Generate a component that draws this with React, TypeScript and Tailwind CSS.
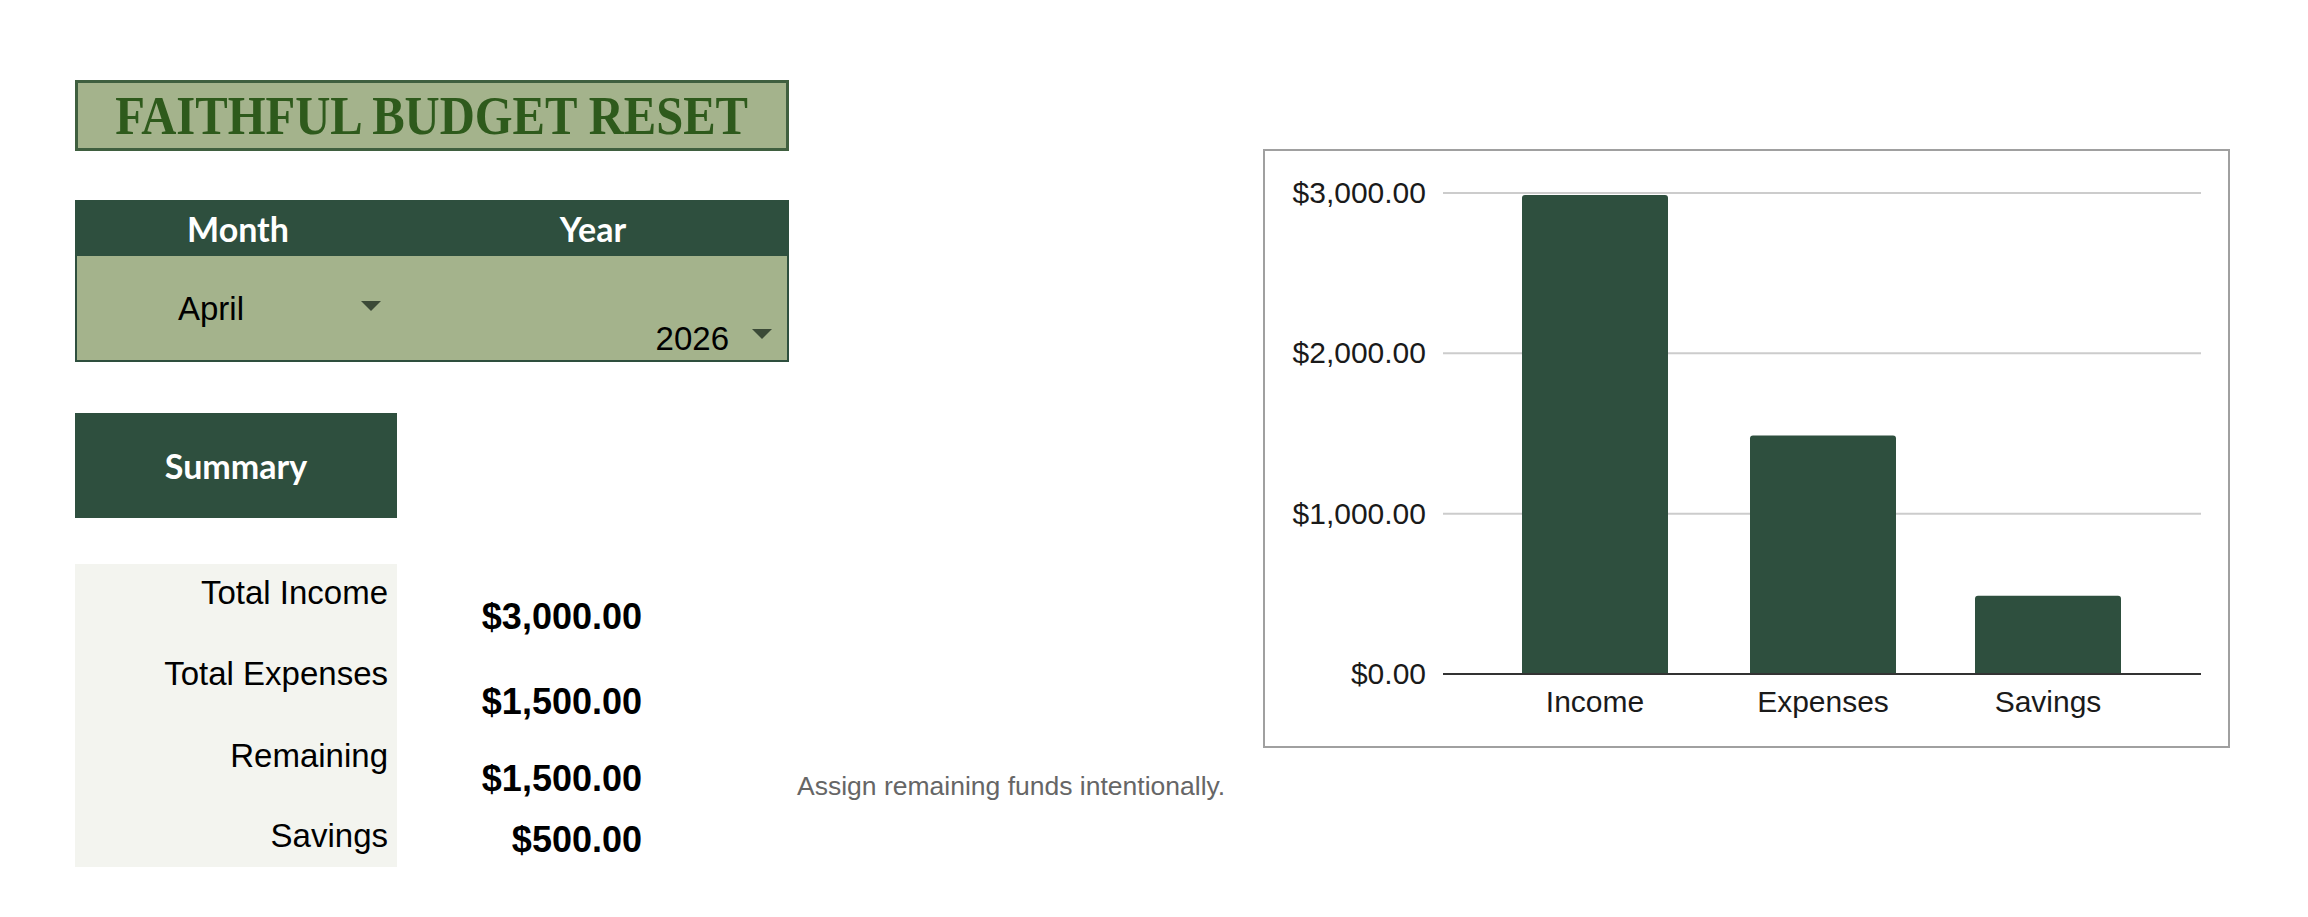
import React from 'react';

const GREEN = '#2e4f3e';

const rows = [
  { label: 'Total Income', value: '$3,000.00', h: 'h-[80px]', lp: 'pt-[12px]', vp: 'pt-[35px]' },
  { label: 'Total Expenses', value: '$1,500.00', h: 'h-[81px]', lp: 'pt-[13px]', vp: 'pt-[40px]' },
  { label: 'Remaining', value: '$1,500.00', h: 'h-[81px]', lp: 'pt-[14px]', vp: 'pt-[36px]', note: true },
  { label: 'Savings', value: '$500.00', h: 'h-[61px]', lp: 'pt-[13px]', vp: 'pt-[16px]' },
];

const chartData = [
  { name: 'Income', value: 3000, x: 257 },
  { name: 'Expenses', value: 1500, x: 485 },
  { name: 'Savings', value: 500, x: 710 },
];

const Caret = ({ className }: { className?: string }) => (
  <svg width="20" height="10" viewBox="0 0 20 10" className={className}>
    <path d="M0 0 L20 0 L10 10 Z" fill="#3b4a37" />
  </svg>
);

const BarChart: React.FC = () => {
  const base = 523;
  const top = 42;
  const span = base - top;
  const grid = [3000, 2000, 1000];
  const fmt = (v: number) => '$' + v.toLocaleString('en-US') + '.00';

  return (
    <svg viewBox="0 0 963 595" className="block w-full h-full font-['Liberation_Sans',Arial,sans-serif]">
      {grid.map((g) => {
        const y = base - (g / 3000) * span;
        return (
          <g key={g}>
            <line x1="178" x2="936" y1={y} y2={y} stroke="#cccccc" strokeWidth="2" />
            <text x="161" y={y + 10} textAnchor="end" fontSize="30" fill="#1a1a1a">{fmt(g)}</text>
          </g>
        );
      })}
      {chartData.map((d) => {
        const y = base - (d.value / 3000) * span + 2;
        const w = 146;
        const r = 3;
        return (
          <path
            key={d.name}
            d={`M${d.x} ${base} L${d.x} ${y + r} Q${d.x} ${y} ${d.x + r} ${y} L${d.x + w - r} ${y} Q${d.x + w} ${y} ${d.x + w} ${y + r} L${d.x + w} ${base} Z`}
            fill={GREEN}
          />
        );
      })}
      <line x1="178" x2="936" y1={base} y2={base} stroke="#333333" strokeWidth="2" />
      <text x="161" y={base + 10} textAnchor="end" fontSize="30" fill="#1a1a1a">$0.00</text>
      {chartData.map((d) => (
        <text key={d.name} x={d.x + 73} y="561" textAnchor="middle" fontSize="30" fill="#1a1a1a">{d.name}</text>
      ))}
    </svg>
  );
};

const App: React.FC = () => {
  return (
    <div className="min-h-screen w-full bg-white flex items-start font-['Liberation_Sans',Arial,sans-serif] text-black">
      <div className="w-[1263px] pl-[75px] pt-[80px] flex flex-col shrink-0">
        {/* Title */}
        <div className="w-[714px] h-[71px] border-[3px] border-[#3f5f3f] bg-[#a4b38c] flex items-center justify-center">
          <span className="inline-block scale-x-90 font-['Liberation_Serif',serif] font-bold text-[54px] leading-none text-[#2e5a1c] whitespace-nowrap">
            FAITHFUL BUDGET RESET
          </span>
        </div>

        {/* Month / Year */}
        <div className="mt-[49px] w-[714px] border-2 border-[#2e4f3e]">
          <div className="h-[54px] bg-[#2e4f3e] flex items-center font-['Lato',sans-serif] font-bold text-[34px] leading-none text-white">
            <div className="w-[322px] text-center">Month</div>
            <div className="flex-1 text-center">Year</div>
          </div>
          <div className="h-[104px] bg-[#a4b38c] flex">
            <div className="w-[322px] flex items-center pl-[101px] pr-[18px]">
              <span className="text-[33px] leading-none">April</span>
              <Caret className="ml-auto -mt-[4px]" />
            </div>
            <div className="flex-1 flex items-end justify-end pr-[15px] pb-[5px]">
              <span className="text-[33px] leading-none">2026</span>
              <Caret className="ml-[23px] mb-[16px]" />
            </div>
          </div>
        </div>

        {/* Summary header */}
        <div className="mt-[51px] w-[322px] h-[105px] bg-[#2e4f3e] flex items-center justify-center font-['Lato',sans-serif] font-bold text-[34px] text-white">
          Summary
        </div>

        {/* Summary rows */}
        <div className="mt-[46px] flex flex-col">
          {rows.map((r) => (
            <div key={r.label} className={`flex ${r.h}`}>
              <div className={`w-[322px] shrink-0 bg-[#f3f4ef] text-right pr-[9px] ${r.lp}`}>
                <span className="text-[33px] leading-none block">{r.label}</span>
              </div>
              <div className={`w-[245px] shrink-0 text-right ${r.vp}`}>
                <span className="text-[36px] leading-none font-bold block">{r.value}</span>
              </div>
              {r.note && (
                <div className="ml-[155px] shrink-0 pt-[48px]">
                  <span className="text-[26.5px] leading-none text-[#666666] whitespace-nowrap block">
                    Assign remaining funds intentionally.
                  </span>
                </div>
              )}
            </div>
          ))}
        </div>
      </div>

      {/* Chart */}
      <div className="mt-[149px] w-[967px] h-[599px] border-2 border-[#a0a0a0] bg-white shrink-0">
        <BarChart />
      </div>
    </div>
  );
};

export default App;
